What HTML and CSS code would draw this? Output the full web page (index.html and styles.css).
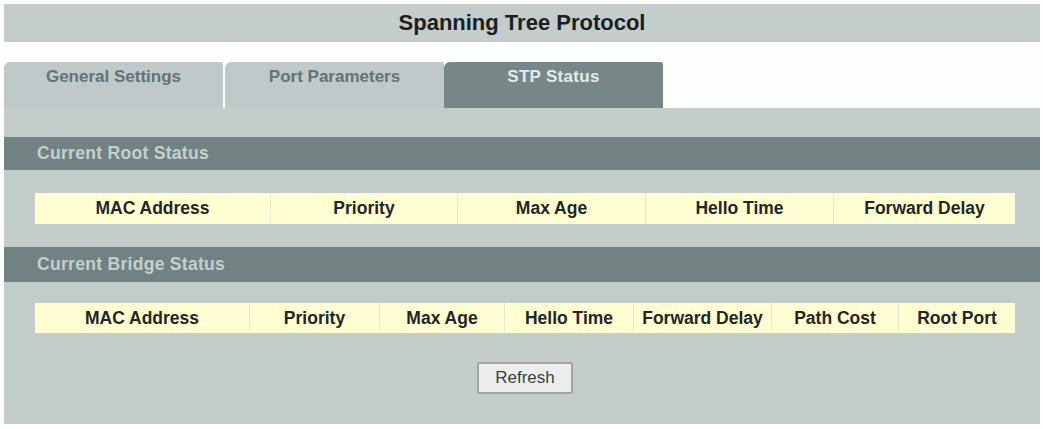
FILE: index.html
```html
<!DOCTYPE html>
<html lang="en">
<head>
    <meta charset="UTF-8">
    <meta name="viewport" content="width=device-width, initial-scale=1.0">
    <title>Spanning Tree Protocol</title>
    <link rel="stylesheet" href="styles.css">
</head>
<body>
    <div class="page-title">Spanning Tree Protocol</div>

    <div class="tabs">
        <div class="tab">General Settings</div>
        <div class="tab">Port Parameters</div>
        <div class="tab active">STP Status</div>
    </div>

    <div class="panel">
        <div class="section-head">Current Root Status</div>
        <table class="status-table root-table">
            <tr>
                <th>MAC Address</th>
                <th>Priority</th>
                <th>Max Age</th>
                <th>Hello Time</th>
                <th>Forward Delay</th>
            </tr>
        </table>

        <div class="section-head bridge">Current Bridge Status</div>
        <table class="status-table bridge-table">
            <tr>
                <th>MAC Address</th>
                <th>Priority</th>
                <th>Max Age</th>
                <th>Hello Time</th>
                <th>Forward Delay</th>
                <th>Path Cost</th>
                <th>Root Port</th>
            </tr>
        </table>

        <div class="actions">
            <button type="button">Refresh</button>
        </div>
    </div>
</body>
</html>
```

FILE: styles.css
```css
body {
    font-family: "Liberation Sans", Arial, sans-serif;
    margin: 0;
    padding: 4px 3px 0 4px;
    background-color: #fdfefe;
}
.page-title {
    height: 38px;
    line-height: 38px;
    text-align: center;
    font-size: 22px;
    font-weight: bold;
    color: #1c1f1f;
    background-color: #c4cccc;
}
.tabs {
    display: flex;
    gap: 2px;
    margin-top: 20px;
    height: 46px;
}
.tab {
    width: 219px;
    padding-top: 5px;
    box-sizing: border-box;
    text-align: center;
    font-size: 17px;
    font-weight: bold;
    color: #627474;
    background-color: #bfc9c9;
    border-radius: 6px 2px 0 0;
}
.tab.active {
    color: #e4eaea;
    background-color: #778787;
    margin-left: -2px;
    letter-spacing: 0.3px;
}
.panel {
    background-color: #c3cbcb;
    padding: 29px 0 30px;
}
.section-head {
    height: 33px;
    line-height: 33px;
    padding-left: 33px;
    font-size: 17.5px;
    font-weight: bold;
    letter-spacing: 0.3px;
    color: #c6cfcf;
    background-color: #728282;
}
.section-head.bridge {
    height: 35px;
    line-height: 35px;
}
.status-table {
    width: 980px;
    margin: 23px 0 23px 31px;
    border-collapse: collapse;
    table-layout: fixed;
    background-color: #ffffd2;
}
.status-table th {
    height: 31px;
    padding: 0;
    font-size: 17.5px;
    font-weight: bold;
    color: #222626;
    border-left: 1px solid #e8e8cc;
    white-space: nowrap;
}
.status-table th:first-child {
    border-left: none;
}
.root-table th:nth-child(1) { width: 235px; }
.root-table th:nth-child(2) { width: 186px; }
.root-table th:nth-child(3) { width: 187px; }
.root-table th:nth-child(4) { width: 187px; }

.bridge-table {
    margin: 21px 0 29px 31px;
}
.bridge-table th { height: 30px; }
.bridge-table th:nth-child(1) { width: 214px; }
.bridge-table th:nth-child(2) { width: 129px; }
.bridge-table th:nth-child(3) { width: 124px; }
.bridge-table th:nth-child(4) { width: 128px; }
.bridge-table th:nth-child(5) { width: 137px; }
.bridge-table th:nth-child(6) { width: 126px; }

.actions {
    display: flex;
    justify-content: center;
    padding-left: 6px;
}
.actions button {
    width: 96px;
    height: 32px;
    font-family: "Liberation Sans", Arial, sans-serif;
    font-size: 17px;
    color: #3a3f3f;
    background-color: #eceeee;
    border: 2px solid #9da6a6;
    border-radius: 2px;
    cursor: pointer;
}
.actions button:hover {
    background-color: #f6f7f7;
}
```
